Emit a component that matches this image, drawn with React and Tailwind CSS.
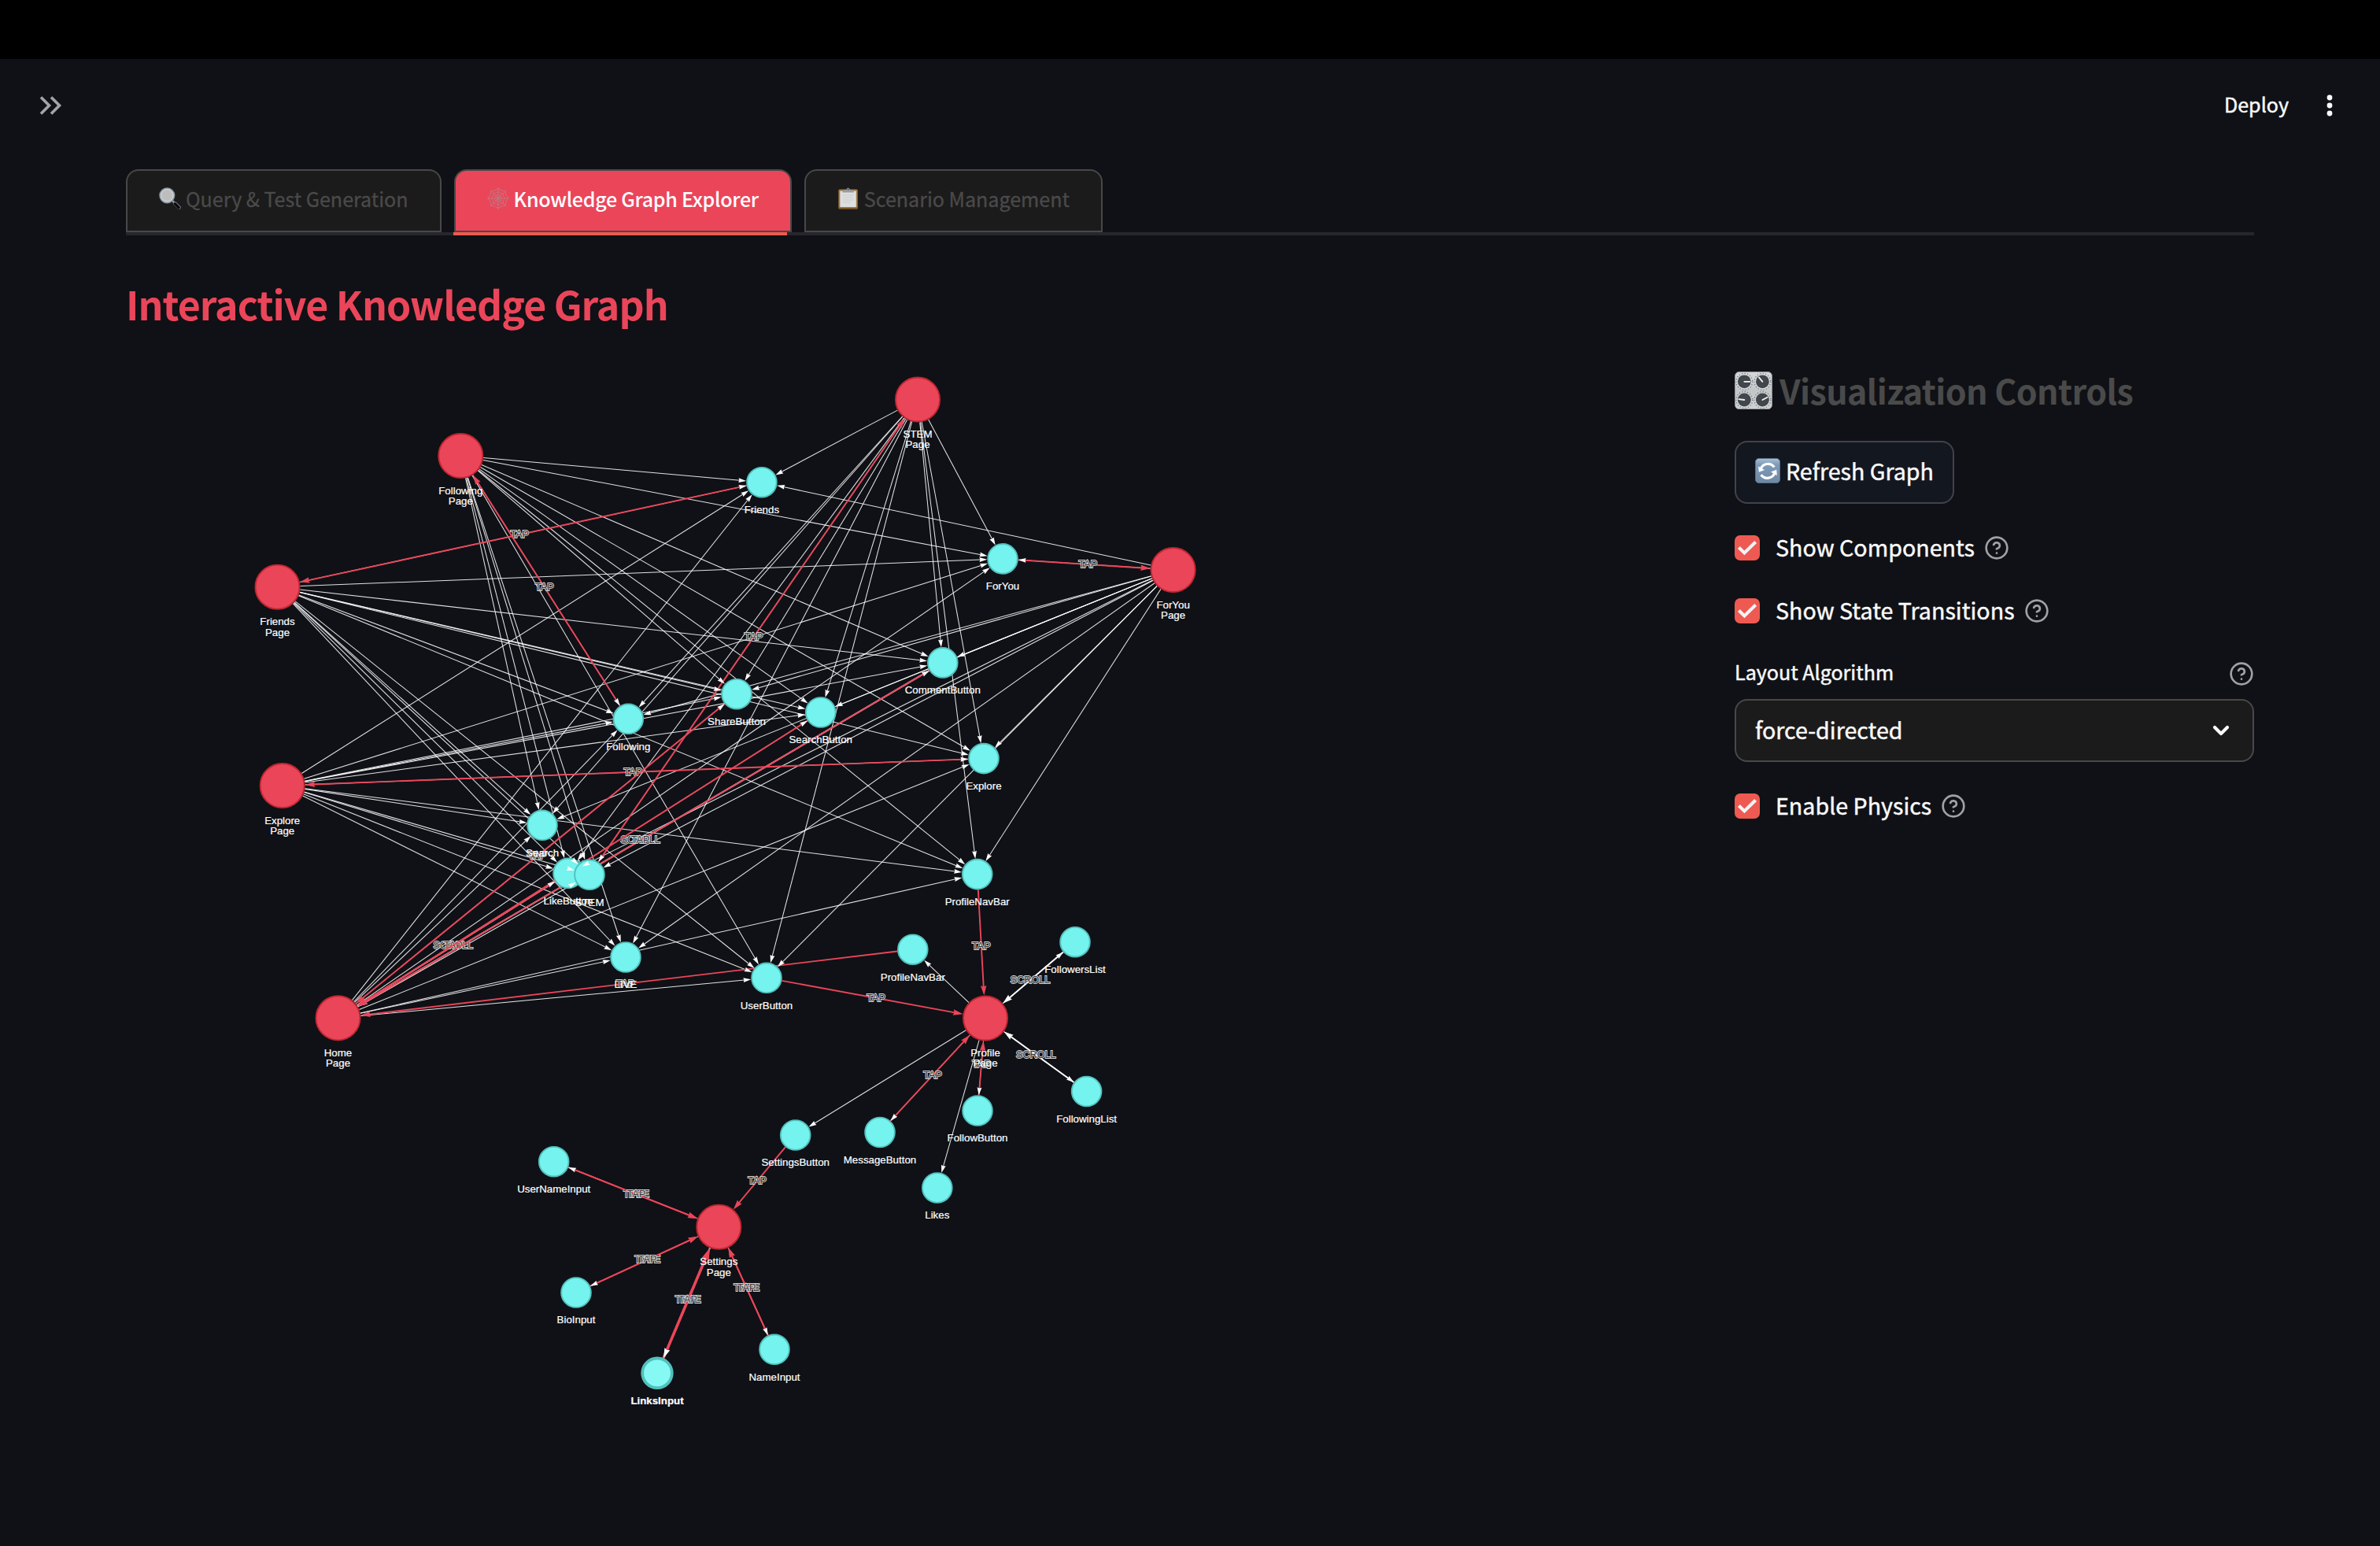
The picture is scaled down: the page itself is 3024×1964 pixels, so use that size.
import React from "react";

const nodes = {
  stemPage: { x: 1166, y: 507.5, page: true, label: ["STEM", "Page"] },
  forYouPage: { x: 1490.6, y: 724, page: true, label: ["ForYou", "Page"] },
  followingPage: { x: 585.3, y: 579, page: true, label: ["Following", "Page"] },
  friendsPage: { x: 352.5, y: 745.7, page: true, label: ["Friends", "Page"] },
  explorePage: { x: 358.7, y: 998, page: true, label: ["Explore", "Page"] },
  homePage: { x: 429.5, y: 1293.3, page: true, label: ["Home", "Page"] },
  profilePage: { x: 1252, y: 1293.5, page: true, label: ["Profile", "Page"] },
  settingsPage: { x: 913.3, y: 1558.7, page: true, label: ["Settings", "Page"] },
  friends: { x: 967.9, y: 612.7, label: ["Friends"] },
  forYou: { x: 1274, y: 709.9, label: ["ForYou"] },
  comment: { x: 1197.8, y: 841.9, label: ["CommentButton"] },
  share: { x: 936, y: 881.7, label: ["ShareButton"] },
  searchButton: { x: 1042.7, y: 905, label: ["SearchButton"] },
  following: { x: 798.3, y: 913.3, label: ["Following"] },
  explore: { x: 1250, y: 963.6, label: ["Explore"] },
  search: { x: 689, y: 1048.3, label: ["Search"] },
  like: { x: 722, y: 1109.3, label: ["LikeButton"] },
  stem: { x: 749, y: 1111.3, label: ["STEM"] },
  live: { x: 795, y: 1216, label: ["LIVE"] },
  user: { x: 974, y: 1242.3, label: ["UserButton"] },
  navBar: { x: 1241.7, y: 1110.6, label: ["ProfileNavBar"] },
  profileNavBar: { x: 1159.8, y: 1206.2, label: ["ProfileNavBar"] },
  followersList: { x: 1366, y: 1196.7, label: ["FollowersList"] },
  followingList: { x: 1380.6, y: 1386.5, label: ["FollowingList"] },
  follow: { x: 1242, y: 1411, label: ["FollowButton"] },
  message: { x: 1118, y: 1438.5, label: ["MessageButton"] },
  settings: { x: 1010.7, y: 1442, label: ["SettingsButton"] },
  likes: { x: 1190.8, y: 1509, label: ["Likes"] },
  userName: { x: 703.7, y: 1475.7, label: ["UserNameInput"] },
  bio: { x: 732, y: 1642, label: ["BioInput"] },
  links: { x: 835, y: 1744.3, hover: true, label: ["LinksInput"] },
  name: { x: 984, y: 1714.3, label: ["NameInput"] },
};

const feedPages = ["followingPage", "friendsPage", "explorePage", "homePage", "stemPage", "forYouPage"];
const feedComponents = [
  "friends", "forYou", "comment", "share", "searchButton", "following", "explore",
  "search", "like", "stem", "live", "user", "navBar",
];

const has = (from, to, width = 1.05) => ({ from, to, width, color: "#ffffff" });
const tap = (from, to, text = "TAP", width = 1.9) => ({ from, to, width, color: "#eb455a", text });
const scroll = (from, to) => ({ from, to, width: 1.9, color: "#ffffff", text: "SCROLL" });

const edges = [
  ...feedPages.flatMap((p) => feedComponents.map((c) => has(p, c))),
  ...["profileNavBar", "settings", "likes", "message", "follow", "followersList", "followingList"].map((c) =>
    has("profilePage", c)
  ),
  ...["userName", "bio", "name"].map((c) => has("settingsPage", c)),
  has("settingsPage", "links", 1.9),
  scroll("like", "homePage"),
  scroll("comment", "homePage"),
  scroll("followersList", "profilePage"),
  scroll("followingList", "profilePage"),
  tap("friends", "friendsPage"),
  tap("following", "followingPage"),
  tap("stem", "stemPage"),
  tap("forYou", "forYouPage"),
  tap("explore", "explorePage"),
  tap("like", "homePage"),
  tap("share", "homePage"),
  tap("searchButton", "homePage"),
  tap("comment", "homePage"),
  tap("profileNavBar", "homePage"),
  tap("navBar", "profilePage"),
  tap("user", "profilePage"),
  tap("message", "profilePage"),
  tap("follow", "profilePage"),
  tap("settings", "settingsPage"),
  ...["userName", "bio", "name"].flatMap((c) => [tap(c, "settingsPage", "TYPE"), tap(c, "settingsPage")]),
  tap("links", "settingsPage", "TYPE", 3.3),
  tap("links", "settingsPage", "TAP", 3.3),
];

const radius = (n) => (n.page ? 29 : n.hover ? 20.7 : 19.8);

function geometry(e) {
  const a = nodes[e.from];
  const b = nodes[e.to];
  const d = Math.hypot(b.x - a.x, b.y - a.y);
  const ux = (b.x - a.x) / d;
  const uy = (b.y - a.y) / d;
  const len = e.width < 1.5 ? 9.8 : e.width < 3 ? 12.4 : 15.5;
  const rb = radius(b);
  return {
    x1: a.x + ux * radius(a),
    y1: a.y + uy * radius(a),
    tx: b.x - ux * rb,
    ty: b.y - uy * rb,
    x2: b.x - ux * (rb + len * 0.85),
    y2: b.y - uy * (rb + len * 0.85),
    mx: (a.x + b.x) / 2,
    my: (a.y + b.y) / 2,
    angle: (Math.atan2(uy, ux) * 180) / Math.PI,
    len,
  };
}

function Graph() {
  const drawn = edges.map((e) => ({ ...e, ...geometry(e) }));
  return (
    <svg
      viewBox="160 440 2004 1460"
      width="2004"
      height="1460"
      className="block shrink-0 font-['Liberation_Sans',Arial,sans-serif]"
    >
      {drawn.map((e, i) => (
        <g key={i}>
          <line x1={e.x1} y1={e.y1} x2={e.x2} y2={e.y2} stroke={e.color} strokeWidth={e.width} strokeOpacity={e.width < 1.5 ? 0.88 : 1} />
          {e.text && (
            <text
              x={e.mx}
              y={e.my + 3.8}
              textAnchor="middle"
              fontSize="12.6"
              fill="#343434"
              stroke="#d6d6d6"
              strokeWidth="1.8"
              paintOrder="stroke"
            >
              {e.text}
            </text>
          )}
        </g>
      ))}
      {Object.entries(nodes).map(([id, n]) => (
        <circle
          key={id}
          cx={n.x}
          cy={n.y}
          r={radius(n) - (n.hover ? 1.9 : 0.95)}
          fill={n.page ? "#eb455a" : n.hover ? "#86f9f5" : "#75f3ee"}
          stroke={n.page ? "#bf2731" : "#52c0bd"}
          strokeWidth={n.hover ? 3.8 : 1.9}
        />
      ))}
      {drawn.map((e, i) => (
        <path
          key={i}
          d="M0 0L-1 .3L-.9 0L-1 -.3Z"
          fill={e.color}
          transform={`translate(${e.tx} ${e.ty}) rotate(${e.angle}) scale(${e.len})`}
        />
      ))}
      {Object.entries(nodes).map(([id, n]) =>
        n.label.map((line, i) => (
          <text
            key={id + i}
            x={n.x}
            y={n.y + (n.page ? 48.5 : n.hover ? 39.8 : 39.3) + i * 13.3}
            textAnchor="middle"
            fontSize="13.3"
            fontWeight={n.hover ? 700 : 400}
            fill="#ffffff"
            stroke="#ffffff"
            strokeWidth=".2"
          >
            {line}
          </text>
        ))
      )}
    </svg>
  );
}

function Magnifier() {
  return (
    <svg width="28" height="28" viewBox="0 0 28 28" className="shrink-0">
      <path d="M16.5 16.5L21 21" stroke="#8b95a1" strokeWidth="2.6" strokeLinecap="round" />
      <path d="M20.4 20.4L25.6 25.6" stroke="#6d7580" strokeWidth="4.6" strokeLinecap="round" />
      <path d="M20.4 20.9L25.2 25.8" stroke="#08090b" strokeWidth="3.2" strokeLinecap="round" />
      <circle cx="10.3" cy="10.3" r="9.2" fill="#bdbdbd" stroke="#8e98a6" strokeWidth="1.8" />
      <circle cx="10.3" cy="10.3" r="7.8" fill="none" stroke="#dedede" strokeWidth="1" />
    </svg>
  );
}

function Web() {
  const ring = (r) =>
    Array.from({ length: 8 }, (_, i) => {
      const a = (i * Math.PI) / 4;
      const b = a + Math.PI / 4;
      const m = a + Math.PI / 8;
      const p = (t, k) => `${14 + k * Math.sin(t)} ${14 - k * Math.cos(t)}`;
      return `M${p(a, r)}Q${p(m, r * 0.8)} ${p(b, r)}`;
    }).join("");
  return (
    <svg width="28" height="28" viewBox="0 0 28 28" className="shrink-0" fill="none" stroke="#c4767f">
      <path strokeWidth=".9" d="M14 0V28M0 14H28M4 4L24 24M24 4L4 24" />
      <path strokeWidth="1" d={ring(12.6) + ring(8.6) + ring(5) + ring(2.4)} />
    </svg>
  );
}

function Clipboard() {
  return (
    <svg width="28" height="28" viewBox="0 0 28 28" className="shrink-0">
      <rect x="1.4" y="2.6" width="24.4" height="25" rx="1.6" fill="#a27a45" />
      <rect x="1.4" y="25.4" width="24.4" height="2.2" rx="1" fill="#7b5424" />
      <rect x="3.4" y="4.6" width="20.4" height="20.6" fill="#dedfdf" />
      <path d="M6.5 10H20.5M6.5 13H20.5M6.5 16H20.5M6.5 19H17" stroke="#cbcccd" strokeWidth="1" />
      <path d="M6.2 6.4Q6.2 3.2 9.6 3.2H11.4Q11.8 .4 13.6 .4Q15.4 .4 15.8 3.2H17.6Q21 3.2 21 6.4Z" fill="#989da2" />
      <circle cx="13.6" cy="2.4" r=".9" fill="#45484b" />
    </svg>
  );
}

function Knobs() {
  const knobs = [
    [12.3, 12.8, 0],
    [35.4, 12.8, -130],
    [12.3, 36, -172],
    [35.4, 36, -28],
  ];
  return (
    <svg width="48" height="48" viewBox="0 0 48 48" className="shrink-0">
      <defs>
        <linearGradient id="panel" x1="0" y1="0" x2="0" y2="1">
          <stop offset="0" stopColor="#d6d8d9" />
          <stop offset=".5" stopColor="#c3c6c8" />
          <stop offset="1" stopColor="#cfd1d2" />
        </linearGradient>
      </defs>
      <rect x=".6" y=".6" width="46.8" height="47" rx="5" fill="url(#panel)" stroke="#9a9da0" strokeWidth="1" />
      {knobs.map(([x, y, a]) => (
        <g key={`${x}-${y}`} transform={`translate(${x} ${y})`}>
          <circle r="10.4" fill="none" stroke="#5c6063" strokeWidth="1.1" strokeDasharray="1.1 2.4" />
          <circle r="9.2" cy=".6" fill="#d8dadb" />
          <circle r="8.4" fill="#41474c" />
          <path d="M0 0H7" stroke="#f4f4f4" strokeWidth="1.8" strokeLinecap="round" transform={`rotate(${a})`} />
        </g>
      ))}
    </svg>
  );
}

function Refresh() {
  return (
    <svg width="32" height="32" viewBox="0 0 32 32" className="shrink-0">
      <defs>
        <linearGradient id="tile" x1="0" y1="0" x2="0" y2="1">
          <stop offset="0" stopColor="#a9bfd5" />
          <stop offset=".25" stopColor="#7f9bb9" />
          <stop offset="1" stopColor="#6d88a5" />
        </linearGradient>
      </defs>
      <rect x=".4" y=".4" width="31.2" height="31.2" rx="4.6" fill="url(#tile)" stroke="#5f7690" strokeWidth=".8" />
      <g fill="none" stroke="#ffffff" strokeWidth="3.2">
        <path d="M7.2 13.6C9.6 6.8 19.4 4.8 24.4 11.4" />
        <path d="M24.8 19C22.4 25.8 12.6 27.8 7.6 21.2" />
      </g>
      <path d="M4.2 10.6L4.8 17.8L12 15Z" fill="#ffffff" />
      <path d="M27.8 22L27.2 14.8L20 17.6Z" fill="#ffffff" />
    </svg>
  );
}

function Help() {
  return (
    <svg width="32" height="32" viewBox="0 0 24 24" fill="none" stroke="#a0a1a4" strokeWidth="2" strokeLinecap="round" strokeLinejoin="round" className="shrink-0">
      <circle cx="12" cy="12" r="10" />
      <path d="M9.09 9a3 3 0 0 1 5.83 1c0 2-3 3-3 3" />
      <path d="M12 17h.01" />
    </svg>
  );
}

function Check({ label, className }) {
  return (
    <label className={`flex h-8 items-center ${className}`}>
      <span className="flex size-8 shrink-0 items-center justify-center rounded-[7px] bg-[#ee5a52]">
        <svg width="26" height="22" viewBox="0 0 26 22" fill="none" stroke="#f2f3f6" strokeWidth="4.2">
          <path d="M2.4 10.6L9.4 17.4L23.6 3.4" />
        </svg>
      </span>
      <span className="mb-0.5 ml-5 mr-3 whitespace-nowrap text-[28.6px] leading-none tracking-[0.02px] [-webkit-text-stroke:0.45px]">
        {label}
      </span>
      <Help />
    </label>
  );
}

function Tab({ icon, children, active }) {
  return (
    <div
      className={`flex h-20 items-center whitespace-nowrap rounded-t-2xl border-2 border-[#484848] px-10 text-[25.1px] leading-none ${
        active
          ? "bg-[#eb455a] font-medium tracking-[-0.32px] text-white"
          : "bg-[#1b1b1b] text-[#4a4a4a] tracking-[-0.02px] [-webkit-text-stroke:0.3px]"
      }`}
    >
      <span className="mb-1.5 mr-1.5">{icon}</span>
      <span className="mb-1">{children}</span>
    </div>
  );
}

export default function App() {
  return (
    <div className="flex h-[1964px] w-[3024px] flex-col overflow-hidden bg-[#0f1116] font-['Noto_Sans_CJK_SC',sans-serif] text-[#fafafa]">
      <div className="h-[75px] shrink-0 bg-black" />
      <header className="flex h-[118px] shrink-0 items-center justify-between pl-[49px] pr-[50px]">
        <svg width="32" height="26" viewBox="0 0 32 26" fill="none" stroke="#a3a4a7" strokeWidth="3.6" className="shrink-0">
          <path d="M3 2.5L13.5 13L3 23.5M16 2.5L26.5 13L16 23.5" />
        </svg>
        <div className="flex items-center gap-[38px]">
          <span className="mb-0.5 whitespace-nowrap text-[25.1px] leading-none [-webkit-text-stroke:0.45px]">Deploy</span>
          <svg width="28" height="28" viewBox="0 0 28 28" fill="#fafafa">
            <circle cx="14" cy="4" r="3.4" />
            <circle cx="14" cy="14" r="3.4" />
            <circle cx="14" cy="24" r="3.4" />
          </svg>
        </div>
      </header>

      <main className="flex flex-col px-40 pt-[22px]">
        <div className="flex gap-4">
          <Tab icon={<Magnifier />}>Query &amp; Test Generation</Tab>
          <Tab icon={<Web />} active>
            Knowledge Graph Explorer
          </Tab>
          <Tab icon={<Clipboard />}>Scenario Management</Tab>
        </div>
        <div className="h-1 bg-[#25272c] pl-[416px]">
          <div className="h-1 w-[424px] bg-[#ee5a50]" />
        </div>

        <h1 className="mt-14 h-[60px] whitespace-nowrap text-[50px] font-bold leading-[60px] tracking-[-0.97px] text-[#eb455a]">
          Interactive Knowledge Graph
        </h1>

        <div className="mt-[25px] flex justify-between">
          <Graph />
          <aside className="-ml-5 flex w-[660px] shrink-0 flex-col items-start pt-8">
            <h2 className="flex h-12 items-center gap-[9px] whitespace-nowrap text-[43px] font-bold leading-none tracking-[-0.6px] text-[#4a4a4a]">
              <Knobs />
              <span className="mb-0.5">Visualization Controls</span>
            </h2>
            <button className="mt-10 flex h-20 items-center gap-[7px] whitespace-nowrap rounded-2xl border-2 border-[#42434a] bg-[#131720] px-6 text-[28.6px] leading-none [-webkit-text-stroke:0.45px]">
              <span className="mb-1">
                <Refresh />
              </span>
              <span className="mb-1">Refresh Graph</span>
            </button>
            <Check label="Show Components" className="mt-10" />
            <Check label="Show State Transitions" className="mt-12" />
            <div className="mt-12 flex h-8 w-full items-center justify-between">
              <span className="mb-1 whitespace-nowrap text-[25.1px] leading-none [-webkit-text-stroke:0.45px]">
                Layout Algorithm
              </span>
              <Help />
            </div>
            <div className="mt-4 flex h-20 w-full items-center justify-between rounded-2xl border-2 border-[#484848] bg-[#1b1b1b] pl-6 pr-[29px]">
              <span className="mb-0.5 whitespace-nowrap text-[28.6px] leading-none [-webkit-text-stroke:0.45px]">
                force-directed
              </span>
              <svg width="22" height="16" viewBox="0 0 22 16" fill="none" stroke="#fafafa" strokeWidth="4.2" strokeLinecap="round" strokeLinejoin="round">
                <path d="M3 4L11 12L19 4" />
              </svg>
            </div>
            <Check label="Enable Physics" className="mt-10" />
          </aside>
        </div>
      </main>
    </div>
  );
}
